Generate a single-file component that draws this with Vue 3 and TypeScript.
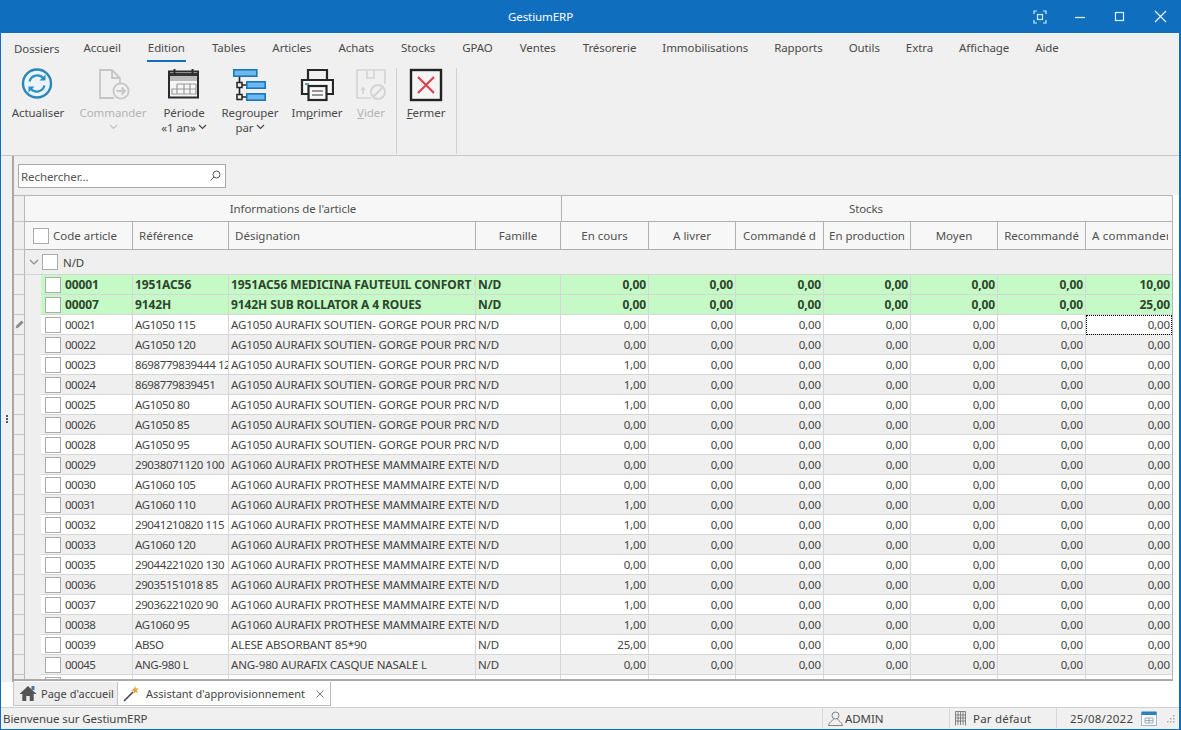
<script setup lang="ts">
interface Row { code: string; ref: string; des: string; fam: string; cours: string; cmd: string; green?: boolean; focus?: boolean; alt?: boolean }
const menus: string[] = ['Dossiers','Accueil','Edition','Tables','Articles','Achats','Stocks','GPAO','Ventes','Trésorerie','Immobilisations','Rapports','Outils','Extra','Affichage','Aide']
const S = 'AG1050 AURAFIX SOUTIEN- GORGE POUR PROTHESE'
const P = 'AG1060 AURAFIX PROTHESE MAMMAIRE EXTERNE'
const raw: [string,string,string,string][] = [
  ['00021','AG1050 115',S,'0,00'],['00022','AG1050 120',S,'0,00'],['00023','8698779839444 125',S,'1,00'],
  ['00024','8698779839451',S,'1,00'],['00025','AG1050 80',S,'1,00'],['00026','AG1050 85',S,'0,00'],
  ['00028','AG1050 95',S,'0,00'],['00029','29038071120 100',P,'0,00'],['00030','AG1060 105',P,'0,00'],
  ['00031','AG1060 110',P,'1,00'],['00032','29041210820 115',P,'1,00'],['00033','AG1060 120',P,'1,00'],
  ['00035','29044221020 130',P,'0,00'],['00036','29035151018 85',P,'1,00'],['00037','29036221020 90',P,'1,00'],
  ['00038','AG1060 95',P,'1,00'],['00039','ABSO','ALESE ABSORBANT  85*90','25,00'],['00045','ANG-980 L','ANG-980 AURAFIX CASQUE NASALE L','0,00'],
]
const rows: Row[] = [
  { code:'00001', ref:'1951AC56', des:'1951AC56 MEDICINA FAUTEUIL CONFORT CONFORT', fam:'N/D', cours:'0,00', cmd:'10,00', green:true },
  { code:'00007', ref:'9142H', des:'9142H SUB ROLLATOR A 4 ROUES', fam:'N/D', cours:'0,00', cmd:'25,00', green:true },
  ...raw.map((r, i): Row => ({ code:r[0], ref:r[1], des:r[2], fam:'N/D', cours:r[3], cmd:'0,00', focus:i===0, alt:i%2===1 })),
]
const numHeads: string[] = ['En cours','A livrer','Commandé d','En production','Moyen','Recommandé','A commander']
</script>

<template>
  <div class="win">
    <header class="title">
      <span class="title-text">GestiumERP</span>
      <div class="wctl">
        <span class="wbtn"><svg width="14" height="14" viewBox="0 0 14 14" fill="none" stroke="#cfeeff" stroke-width="1.2"><path d="M1 4V1h3M10 1h3v3M13 10v3h-3M4 13H1v-3"/><rect x="4.5" y="4.5" width="5" height="5"/></svg></span>
        <span class="wbtn"><svg width="12" height="12" viewBox="0 0 12 12" stroke="#e8f4ff" stroke-width="1.2"><path d="M1 6.5h10"/></svg></span>
        <span class="wbtn"><svg width="12" height="12" viewBox="0 0 12 12" fill="none" stroke="#e8f4ff" stroke-width="1.2"><rect x="1.5" y="1.5" width="8" height="8"/></svg></span>
        <span class="wbtn"><svg width="13" height="13" viewBox="0 0 13 13" stroke="#e8f4ff" stroke-width="1.2"><path d="M1 1l11 11M12 1L1 12"/></svg></span>
      </div>
    </header>

    <nav class="menu">
      <span v-for="m in menus" :key="m" class="mi" :class="{ on: m === 'Edition' }">{{ m }}</span>
    </nav>

    <section class="ribbon">
      <div class="rb w64">
        <svg class="ic" viewBox="0 0 34 34" fill="none"><circle cx="16" cy="15.5" r="14" fill="#eaf5fb" stroke="#2f86b6" stroke-width="2.4"/><path d="M8.5 13.5a8 8 0 0 1 14-3" stroke="#2f8fc4" stroke-width="2.2"/><path d="M24.5 6.5v6h-6z" fill="#2f8fc4"/><path d="M23.5 17.5a8 8 0 0 1-14 3" stroke="#2f8fc4" stroke-width="2.2"/><path d="M7.5 24.5v-6h6z" fill="#2f8fc4"/></svg>
        <span class="lb">Actualiser</span>
      </div>
      <div class="rb w76 off">
        <svg class="ic" viewBox="0 0 34 34" fill="none" stroke="#c6c6c6" stroke-width="1.8"><path d="M18 30H4V2h12l8 8v7M16 2v8h8"/><circle cx="25" cy="23" r="7.6" fill="#f0f0f0"/><path d="M20.5 23h8M25.5 19.5l3.5 3.5-3.5 3.5"/></svg>
        <span class="lb">Commander</span>
        <svg class="chev" width="9" height="6" viewBox="0 0 9 6" fill="none" stroke="#c0c0c0" stroke-width="1.1"><path d="M1 1l3.5 3.5L8 1"/></svg>
      </div>
      <div class="rb w66">
        <svg class="ic" viewBox="0 0 34 34" fill="none"><rect x="2" y="3.5" width="29" height="26" fill="#f5f5f5" stroke="#2b2b2b" stroke-width="2"/><rect x="3" y="5" width="27" height="3" fill="#333"/><rect x="3" y="8" width="27" height="5" fill="#b9b9b9"/><path d="M7.5 1v6M25.5 1v6" stroke="#2b2b2b" stroke-width="2"/><path d="M10 16h19v10H5v-5h24M5 21v5M10 16v10M17 16v10M23 16v10" stroke="#9a9a9a" stroke-width="1.2"/></svg>
        <span class="lb">Période</span>
        <span class="lb">«1 an»<svg class="chev-i" width="9" height="6" viewBox="0 0 9 6" fill="none" stroke="#444" stroke-width="1.1"><path d="M1 1l3.5 3.5L8 1"/></svg></span>
      </div>
      <div class="rb w66">
        <svg class="ic" viewBox="0 0 34 34" fill="none"><path d="M6.5 8v21h8M6.5 17h8" stroke="#222" stroke-width="1.6"/><rect x="0.8" y="1.8" width="23" height="6.4" fill="#6cb8f0" stroke="#1d76b8" stroke-width="1.6"/><rect x="13.8" y="13.8" width="18.4" height="6.4" fill="#6cb8f0" stroke="#1d76b8" stroke-width="1.6"/><rect x="13.8" y="25.8" width="18.4" height="6.4" fill="#6cb8f0" stroke="#1d76b8" stroke-width="1.6"/><rect x="4" y="14.5" width="5" height="5" fill="#f0f0f0" stroke="#222" stroke-width="1.5"/><rect x="4" y="26.5" width="5" height="5" fill="#f0f0f0" stroke="#222" stroke-width="1.5"/></svg>
        <span class="lb">Regrouper</span>
        <span class="lb">par<svg class="chev-i" width="9" height="6" viewBox="0 0 9 6" fill="none" stroke="#444" stroke-width="1.1"><path d="M1 1l3.5 3.5L8 1"/></svg></span>
      </div>
      <div class="rb w68">
        <svg class="ic" viewBox="0 0 34 34" fill="none" stroke="#262626" stroke-width="2.2"><path d="M8 12V2h19v10"/><path d="M8 26H2V12h31v14h-6" fill="#f7f7f7"/><rect x="8.5" y="18" width="18" height="14" fill="#f7f7f7"/><path d="M12 23h11M12 27h11" stroke="#777" stroke-width="1.6"/><path d="M5 16h4" stroke="#2f86b6" stroke-width="1.6"/></svg>
        <span class="lb">Im<u>p</u>rimer</span>
      </div>
      <div class="rb w40 off">
        <svg class="ic" viewBox="0 0 34 34" fill="none" stroke="#d4d4d4" stroke-width="1.6"><path d="M17 30H3V2h28v14M13 2v8h7V2"/><path d="M9 26v-6M7 22l2-2 2 2"/><circle cx="24" cy="24" r="7" fill="#f0f0f0" stroke-width="2"/><path d="M19 29l10-10" stroke-width="2"/></svg>
        <span class="lb"><u>V</u>ider</span>
      </div>
      <div class="sep first"></div>
      <div class="rb w50">
        <svg class="ic" viewBox="0 0 34 34" fill="none"><rect x="2" y="2" width="30" height="30" fill="#f5f5f5" stroke="#222" stroke-width="2.4"/><path d="M9 9l16 16M25 9L9 25" stroke="#d8434e" stroke-width="2.2"/></svg>
        <span class="lb"><u>F</u>ermer</span>
      </div>
      <div class="sep"></div>
    </section>

    <main class="body">
      <div class="split"><i></i><i></i><i></i></div>
      <div class="pane">
        <div class="searchbar">
          <div class="search">
            <span>Rechercher...</span>
            <svg width="12" height="12" viewBox="0 0 12 12" fill="none" stroke="#555" stroke-width="1"><circle cx="7.5" cy="4.5" r="3.5"/><path d="M5 7L1.5 10.5"/></svg>
          </div>
        </div>
        <div class="grid">
          <div class="r hg">
            <div class="gut"></div>
            <div class="span-a">Informations de l'article</div>
            <div class="span-b">Stocks</div>
          </div>
          <div class="r hc">
            <div class="gut"></div>
            <div class="h first-h"><span class="cb"></span><span>Code article</span></div>
            <div class="h">Référence</div>
            <div class="h">Désignation</div>
            <div class="h ctr">Famille</div>
            <div v-for="h in numHeads" :key="h" class="h ctr" :class="{ lft: h === 'A commander' }"><span>{{ h }}</span></div>
          </div>
          <div class="r grp">
            <div class="gut"></div>
            <div class="grp-in">
              <svg width="10" height="7" viewBox="0 0 10 7" fill="none" stroke="#8a8a8a" stroke-width="1.2"><path d="M1 1l4 4 4-4"/></svg>
              <span class="cb"></span>
              <span>N/D</span>
            </div>
          </div>
          <div v-for="row in rows" :key="row.code" class="r d" :class="{ green: row.green, alt: row.alt }">
            <div class="gut">
              <svg v-if="row.focus" width="9" height="9" viewBox="0 0 9 9"><path d="M0.5 8.5l1-3L6.5 0.5l2 2-5 5z" fill="#8a8a8a"/></svg>
            </div>
            <div class="ind"></div>
            <div class="c code"><span class="cb"></span><span class="digits">{{ row.code }}</span></div>
            <div class="c digits-ref">{{ row.ref }}</div>
            <div class="c">{{ row.des }}</div>
            <div class="c">{{ row.fam }}</div>
            <div class="c n">{{ row.cours }}</div>
            <div v-for="i in 5" :key="i" class="c n">0,00</div>
            <div class="c n" :class="{ focus: row.focus }">{{ row.cmd }}</div>
          </div>
          <div class="r d">
            <div class="gut"></div>
            <div class="ind"></div>
            <div class="c code"><span class="cb"></span></div>
            <div v-for="i in 10" :key="i" class="c"></div>
          </div>
        </div>
      </div>
    </main>

    <div class="tabs">
      <div class="tab home">
        <svg width="18" height="17" viewBox="0 0 18 17"><path d="M9 1L0.5 9h2.8v7h4v-5h3.4v5h4V9h2.8z" fill="#555"/><rect x="12.5" y="1" width="3" height="4" fill="#3f78b0"/></svg>
        <span>Page d'accueil</span>
      </div>
      <div class="tab act">
        <svg width="17" height="17" viewBox="0 0 17 17"><path d="M1 16L10 7" stroke="#444" stroke-width="1.6"/><path d="M12 1l.8 2.6 2.7-.3-1.7 2.1 1.4 2.3-2.6-.8-1.8 2-.1-2.7L8 5.200l2.500-1z" fill="#e8a33a"/></svg>
        <span class="tt">Assistant d'approvisionnement</span>
        <svg class="x" width="8" height="8" viewBox="0 0 8 8" stroke="#777" stroke-width="1"><path d="M.5.5l7 7M7.500.5l-7 7"/></svg>
      </div>
    </div>

    <footer class="status">
      <span class="st-l">Bienvenue sur GestiumERP</span>
      <div class="st-i u1">
        <svg width="15" height="15" viewBox="0 0 15 15" fill="none" stroke="#777" stroke-width=".9"><circle cx="7.500" cy="4.500" r="3.500"/><path d="M5.500 8C5 10 1 10.500 .5 14.500h14C14 10.500 10 10 9.500 8"/></svg>
        <span>ADMIN</span>
      </div>
      <div class="st-i u2">
        <svg width="11" height="15" viewBox="0 0 11 15" fill="none" stroke="#777" stroke-width=".9"><path d="M.5 14.500V.5h10v14M3 1v13M5.500 1v13M8 1v13M.5 4h10M.5 7h10M.5 10h10"/></svg>
        <span>Par défaut</span>
      </div>
      <div class="st-i u3">
        <span class="date">25/08/2022</span>
        <svg class="cal" width="16" height="16" viewBox="0 0 16 16" fill="none"><rect x=".5" y="2.500" width="15" height="13" fill="#f8fafc" stroke="#9ab6cc"/><rect x=".5" y="1.500" width="15" height="3.500" fill="#2f7fb8"/><path d="M4 8h8v5H4zM8 8v5M4 10.500h8" stroke="#8c9aa6" stroke-width=".8"/></svg>
        <svg class="grip" width="9" height="9" viewBox="0 0 9 9" fill="#aaa"><rect x="7" y="1" width="1.500" height="1.500"/><rect x="4" y="4" width="1.500" height="1.500"/><rect x="7" y="4" width="1.500" height="1.500"/><rect x="1" y="7" width="1.500" height="1.500"/><rect x="4" y="7" width="1.500" height="1.500"/><rect x="7" y="7" width="1.500" height="1.500"/></svg>
      </div>
    </footer>
  </div>
</template>

<style>
html, body { margin: 0; padding: 0; background: #f0f0f0; }
</style>

<style scoped>
* { box-sizing: border-box; }
.win {
  width: 1181px; height: 730px; display: flex; flex-direction: column; overflow: hidden;
  font-family: "Noto Sans", "Open Sans", sans-serif; font-size: 11.5px; letter-spacing: -.08px; color: #444;
  border: 1px solid #106ebe; border-top: 0; background: #f0f0f0; border-right-width: 2px;
}
.title { height: 33px; flex: none; margin: 0 -2px 0 -1px; background: #106ebe; color: #fff; position: relative; display: flex; align-items: center; justify-content: center; padding-right: 100px; }
.wctl { position: absolute; right: 1px; top: 0; height: 33px; display: flex; }
.wbtn { width: 40px; height: 33px; display: flex; align-items: center; justify-content: center; }
.menu { height: 34px; flex: none; display: flex; gap: 27px; padding: 7px 0 0 13px; color: #4a4a4a; }
.mi { height: 21px; line-height: 16px; position: relative; }
.mi:first-child { margin-right: -3px; top: 1px; }
.mi:nth-child(n+11) { margin-left: -1px; }
.mi.on::after { content: ""; position: absolute; left: -1px; right: -1px; bottom: -1px; height: 2px; background: #106ebe; }
.ribbon { height: 89px; flex: none; display: flex; padding: 1px 0 0 5px; border-bottom: 1px solid #c8c8c8; }
.rb { display: flex; flex-direction: column; align-items: center; flex: none; color: #4a4a4a; }
.w64 { width: 64px; } .w76 { width: 76px; margin-left: 5px; } .w66 { width: 66px; } .w68 { width: 68px; } .w40 { width: 40px; } .w50 { width: 50px; }
.off { color: #b4b4b4; }
.ic { width: 34px; height: 34px; flex: none; margin-bottom: 3px; }
.lb { line-height: 15px; white-space: nowrap; }
.chev { margin-top: 4px; }
.chev-i { margin-left: 2px; vertical-align: 2px; }
.sep { width: 1px; height: 86px; background: #d0d0d0; flex: none; margin-left: 5px; }
.sep.first { margin-left: 5px; margin-right: 4px; }
.body { flex: 1; min-height: 0; display: flex; }
.split { width: 11px; flex: none; display: flex; flex-direction: column; align-items: center; justify-content: center; gap: 1px; background: #f0f0f0; }
.split i { width: 2px; height: 2px; background: #555; }
.pane { flex: 1; min-width: 0; display: flex; flex-direction: column; border-left: 2px solid #a8a8a8; background: #fff; }
.searchbar { height: 39px; flex: none; padding: 8px 0 0 4px; background: #f0f0f0; }
.search { width: 208px; height: 24px; background: #fff; border: 1px solid #a9a9a9; display: flex; align-items: center; justify-content: space-between; padding: 0 4px 0 2px; color: #555; }
.grid { height: 486px; flex: none; overflow: hidden; border-top: 1px solid #b5b5b5; border-bottom: 2px solid #aaa; width: 1159px; border-right: 1px solid #b5b5b5; }
.r { display: grid; grid-template-columns: 11px 16px 92px 96px 247px 85px 88px 87px 88px 87px 87px 88px 86px; }
.gut { background: #efefef; border-right: 1px solid #b9b9b9; border-bottom: 1px solid #c4c4c4; display: flex; align-items: center; justify-content: center; padding-left: 1px; }
.hg { height: 26px; background: #f7f7f7; }
.span-a { grid-column: 2 / 7; text-align: center; line-height: 25px; border-bottom: 1px solid #b0b0b0; color: #505050; }
.span-b { grid-column: 7 / 14; text-align: center; line-height: 25px; border-left: 1px solid #b0b0b0; border-bottom: 1px solid #b0b0b0; color: #505050; padding-right: 2px; }
.hc { height: 28px; background: #f7f7f7; letter-spacing: 0; }
.h { border-right: 1px solid #b0b0b0; border-bottom: 1px solid #b0b0b0; line-height: 26px; padding-left: 6px; white-space: nowrap; overflow: hidden; color: #505050; display: flex; align-items: center; }
.first-h { grid-column: 2 / 4; padding-left: 8px; gap: 4px; }
.ctr { justify-content: center; padding: 0; }
.lft { justify-content: flex-start; padding-left: 6px; border-right: 0; }
.lft span { display: block; width: 76px; overflow: hidden; flex: none; letter-spacing: .25px; }
.cb { width: 16px; height: 16px; background: #fff; border: 1px solid #ababab; flex: none; display: block; }
.grp { height: 25px; background: #efefef; }
.grp-in { grid-column: 2 / 14; display: flex; align-items: center; padding-left: 4px; border-bottom: 1px solid #d4d4d4; }
.grp-in .cb { margin: 0 5px 0 3px; }
.d { height: 20px; background: #fff; letter-spacing: -.12px; }
.d.alt { background: #efefef; }
.digits { letter-spacing: -.5px; }
.digits-ref { letter-spacing: -.4px; }
.d.green { background: #c5f9c5; font-weight: 700; font-size: 12px; letter-spacing: -.1px; color: #2c452c; }
.green .digits, .green .digits-ref { letter-spacing: -.1px; }
.ind { background: #efefef; }
.c { border-right: 1px solid #d6d6d6; border-bottom: 1px solid #d6d6d6; line-height: 19px; padding: 0 2px; white-space: nowrap; overflow: hidden; }
.code { display: flex; align-items: center; gap: 4px; padding-left: 4px; }
.n { text-align: right; }
.d .c:last-child { border-right: 0; }
.focus { outline: 1px dotted #000; outline-offset: -1px; }
.tabs { height: 25px; flex: none; display: flex; background: #fff; padding-left: 12px; }
.tab { display: flex; align-items: center; height: 24px; font-size: 11px; letter-spacing: 0; color: #444; white-space: nowrap; }
.tab svg { flex: none; }
.home { width: 105px; background: #eee; border: 1px solid #c4c4c4; border-top: 0; padding-left: 5px; gap: 4px; }
.act { width: 213px; background: #fff; border-right: 1px solid #bbb; border-bottom: 1px solid #bbb; padding-left: 5px; }
.tt { margin-left: 6px; }
.x { margin-left: 11px; }
.status { height: 22px; flex: none; display: flex; align-items: center; border-top: 1px solid #d0d0d0; padding-bottom: 1px; }
.st-l { padding-left: 2px; flex: 1; }
.st-i { display: flex; align-items: center; height: 100%; border-left: 1px solid #d8d8d8; }
.u1 { width: 127px; padding-left: 5px; gap: 2px; }
.u2 { width: 107px; padding-left: 5px; gap: 7px; letter-spacing: .2px; }
.u3 { width: 123px; padding-left: 13px; }
.date { letter-spacing: .2px; }
.cal { margin-left: 8px; flex: none; }
.grip { margin-left: 9px; flex: none; }
</style>
